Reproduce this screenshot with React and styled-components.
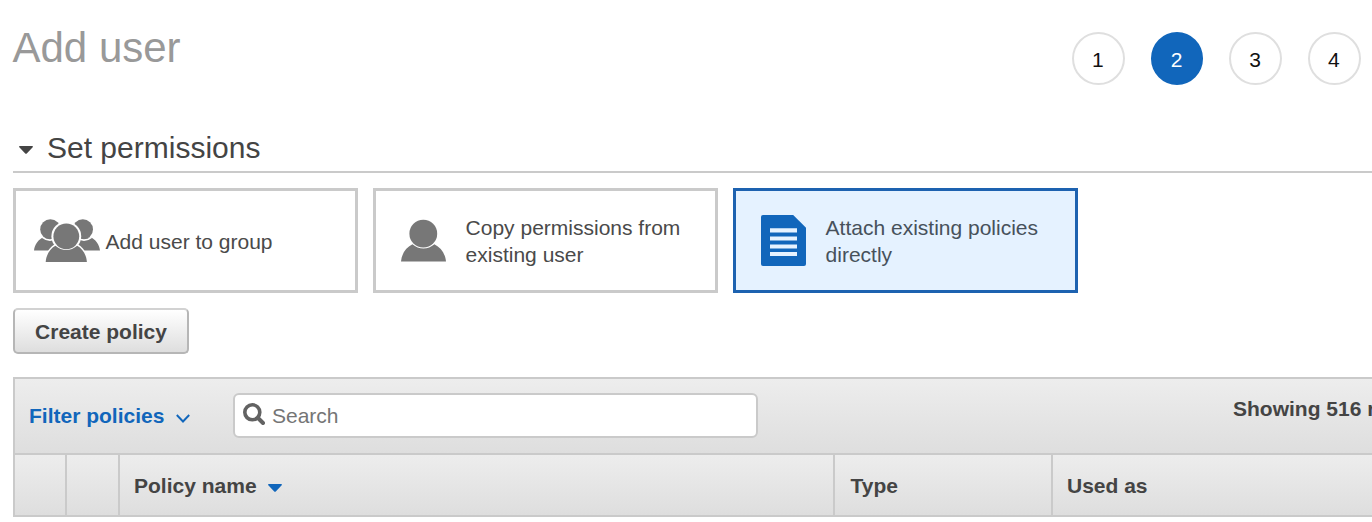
import React from "react";
import styled, { createGlobalStyle } from "styled-components";

const blue = "#1166bb";
const line = "#cacaca";
const ink = "#444444";

const GlobalStyle = createGlobalStyle`
  *, *::before, *::after { box-sizing: border-box; }
  html, body { margin: 0; background: #fff; }
  body {
    font-family: "Liberation Sans", Arial, Helvetica, sans-serif;
    font-size: 21px;
    color: ${ink};
    overflow: hidden;
  }
`;

const Page = styled.main`
  width: 100%;
  height: 522px;
  padding-left: 13px;
  overflow: hidden;
`;

const Header = styled.header`
  display: flex;
  justify-content: space-between;
  align-items: flex-start;
  height: 123px;
  padding: 24px 11.4px 0 0;
`;

const Title = styled.h1`
  margin: 0 0 0 -0.5px;
  font-size: 42px;
  line-height: 48px;
  font-weight: 400;
  color: #999;
`;

const Steps = styled.ol`
  display: flex;
  gap: 26.2px;
  margin: 8px 0 0;
  padding: 0;
  list-style: none;
`;

const Step = styled.li`
  display: flex;
  align-items: center;
  justify-content: center;
  width: 52.5px;
  height: 53px;
  padding: 2px 1px 0 0;
  border: 2px solid ${(p) => (p.$active ? blue : "#dfdfdf")};
  border-radius: 50%;
  background: ${(p) => (p.$active ? blue : "#fff")};
  color: ${(p) => (p.$active ? "#fff" : "#111")};
  font-size: 21px;
`;

const SectionTitle = styled.h2`
  display: flex;
  align-items: center;
  gap: 14px;
  height: 50px;
  margin: 0;
  padding: 2px 0 0 6px;
  border-bottom: 2px solid ${line};
  font-size: 30px;
  font-weight: 400;
  line-height: 34px;

  svg { margin-top: 3px; }
`;

const Options = styled.div`
  display: flex;
  gap: 15px;
  padding-top: 15px;
`;

const Option = styled.div`
  display: flex;
  align-items: center;
  width: 345px;
  height: 105px;
  border: 3px solid ${(p) => (p.$selected ? "#1d62b0" : line)};
  background: ${(p) => (p.$selected ? "#e5f2ff" : "#fff")};
  color: ${(p) => (p.$selected ? "#47515b" : "#4a4a4a")};
  line-height: 27px;
`;

const OptionIcon = styled.span`
  display: flex;
  justify-content: center;
  flex: none;
  width: 68px;
  margin: 0 4.6px 0 17px;
`;

const OptionLabel = styled.span`
  width: 235px;
  padding-top: 1px;
`;

const Button = styled.button`
  display: block;
  width: 176px;
  height: 46px;
  margin: 15px 0 23px;
  padding: 2px 0 0;
  border: 2px solid #b6b6b6;
  border-top-color: #d2d2d2;
  border-radius: 5px;
  background: linear-gradient(#ffffff, #dedede);
  font: bold 21px "Liberation Sans", Arial, sans-serif;
  color: ${ink};
`;

const Panel = styled.section`
  width: 1459px;
  border: 2px solid ${line};
`;

const Toolbar = styled.div`
  display: flex;
  height: 74px;
  padding: 14px 0 0 14px;
  background: linear-gradient(#ededed, #dedede);
`;

const Filter = styled.div`
  display: flex;
  align-items: center;
  gap: 12px;
  width: 204px;
  height: 46px;
  color: ${blue};
  font-weight: 700;

  svg { margin-top: 5px; }
`;

const SearchBox = styled.div`
  display: flex;
  align-items: center;
  gap: 7px;
  width: 525px;
  height: 45px;
  padding-left: 8px;
  border: 2px solid ${line};
  border-radius: 6px;
  background: #fff;
  color: #757575;

  svg { margin-bottom: 3px; }
`;

const Count = styled.div`
  margin-left: 475px;
  padding-top: 4px;
  line-height: 24px;
  font-weight: 700;
  white-space: nowrap;
`;

const Columns = styled.div`
  display: grid;
  grid-template-columns: 52px 53px 715px 218px 1fr;
  height: 62px;
  border-top: 2px solid ${line};
  background: linear-gradient(#ededed, #dedede);
`;

const Column = styled.div`
  display: flex;
  align-items: center;
  gap: 12px;
  padding: 1px 0 0 ${(p) => p.$indent || 14}px;
  border-right: 2px solid ${line};
  font-weight: 700;

  &:last-child { border-right: 0; }
  svg { margin: 4px 0 0 -0.5px; }
`;

const Caret = ({ color }) => (
  <svg width="14" height="8" viewBox="0 0 14 8">
    <path d="M.8 0h12.4c.7 0 1 .7.5 1.2L8 7.3c-.6.7-1.4.7-2 0L.3 1.2C-.2.7.1 0 .8 0z" fill={color} />
  </svg>
);

const GroupIcon = () => (
  <svg width="66" height="44" viewBox="0 0 66 44" fill="#777">
    <circle cx="16.4" cy="10.4" r="10.2" />
    <circle cx="48.8" cy="10.4" r="10.2" />
    <path d="M0 31.500c.6-6 4.500-11.200 9.200-13h14.600L26 31.500zM66 31.500c-.6-6-4.500-11.200-9.200-13H42.200L40 31.500z" />
    <path d="M8.500 18.300q7.500 5.600 15 0M57.500 18.300q-7.500 5.600-15 0" fill="none" stroke="#fff" strokeWidth="1.600" />
    <circle cx="32.300" cy="17.300" r="14.900" fill="#fff" />
    <path d="M10.500 43c.6-8 4.500-14.500 10.500-18h22.600c6 3.500 9.900 10 10.500 18z" fill="#fff" />
    <path d="M11.700 43c.4-7 4.300-13.300 9.700-16.300 6.300 5.600 15.500 5.600 21.800 0 5.400 3 9.300 9.300 9.700 16.300z" />
    <circle cx="32.300" cy="17.300" r="12.900" />
  </svg>
);

const UserIcon = () => (
  <svg width="52" height="44" viewBox="0 0 52 44" fill="#777">
    <circle cx="22.300" cy="14.700" r="13.900" />
    <path d="M0 42.500c.7-7.800 4.900-13.900 11.400-17.200 6.300 5.700 15.700 5.700 22 0C39.900 28.600 44.300 34.700 45 42.500z" />
  </svg>
);

const DocumentIcon = () => (
  <svg width="52" height="51" viewBox="0 0 52 51">
    <path d="M2 0h30.200L45 12.800V49a2 2 0 0 1-2 2H2a2 2 0 0 1-2-2V2a2 2 0 0 1 2-2z" fill={blue} />
    <path d="M9 13.200h27v4.200H9zM9 21.400h27v4H9zM9 29.400h27v4H9zM9 37h27v4H9z" fill="#e5f2ff" />
  </svg>
);

const ChevronIcon = () => (
  <svg width="14" height="9" viewBox="0 0 14 9" fill="none" stroke={blue} strokeWidth="1.900">
    <path d="M.8 1L7 7.500 13.200 1" />
  </svg>
);

const SearchIcon = () => (
  <svg width="22" height="22" viewBox="0 0 22 22" fill="none" stroke="#626262">
    <circle cx="9.300" cy="9.300" r="7.500" strokeWidth="3.600" />
    <path d="M15 15l5 5" strokeWidth="4" strokeLinecap="round" />
  </svg>
);

const steps = [1, 2, 3, 4];
const options = [
  { label: "Add user to group", Icon: GroupIcon },
  { label: "Copy permissions from existing user", Icon: UserIcon },
  { label: "Attach existing policies directly", Icon: DocumentIcon, selected: true },
];

export default function App() {
  return (
    <>
      <GlobalStyle />
      <Page>
        <Header>
          <Title>Add user</Title>
          <Steps>
            {steps.map((n) => (
              <Step key={n} $active={n === 2}>{n}</Step>
            ))}
          </Steps>
        </Header>
        <SectionTitle>
          <Caret color={ink} />
          Set permissions
        </SectionTitle>
        <Options>
          {options.map(({ label, Icon, selected }) => (
            <Option key={label} $selected={selected}>
              <OptionIcon><Icon /></OptionIcon>
              <OptionLabel>{label}</OptionLabel>
            </Option>
          ))}
        </Options>
        <Button>Create policy</Button>
        <Panel>
          <Toolbar>
            <Filter>
              Filter policies
              <ChevronIcon />
            </Filter>
            <SearchBox>
              <SearchIcon />
              Search
            </SearchBox>
            <Count>Showing 516 results</Count>
          </Toolbar>
          <Columns>
            <Column />
            <Column />
            <Column>
              Policy name
              <Caret color={blue} />
            </Column>
            <Column $indent={15.5}>Type</Column>
            <Column>Used as</Column>
          </Columns>
        </Panel>
      </Page>
    </>
  );
}
